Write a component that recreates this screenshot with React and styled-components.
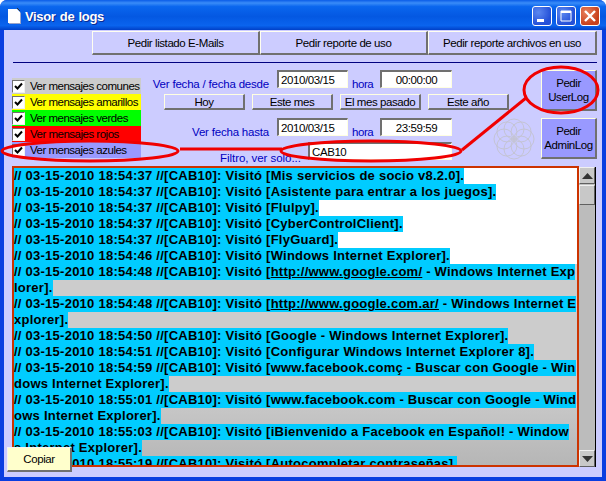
import styled, { createGlobalStyle } from 'styled-components'

const GlobalStyle = createGlobalStyle`
  html, body {
    margin: 0;
    padding: 0;
    background: #fff;
  }
  * {
    box-sizing: border-box;
  }
`

const stamp = (time) => `// 03-15-2010 ${time} //[CAB10]: Visitó [`

const whiteEntries = [
  { lines: [stamp('18:54:37') + 'Mis servicios de socio v8.2.0].'] },
  { lines: [stamp('18:54:37') + 'Asistente para entrar a los juegos].'] },
  { lines: [stamp('18:54:37') + 'Flulpy].'] },
  { lines: [stamp('18:54:37') + 'CyberControlClient].'] },
  { lines: [stamp('18:54:37') + 'FlyGuard].'] },
  { lines: [stamp('18:54:46') + 'Windows Internet Explorer].'] },
]

const grayEntries = [
  { link: 'http://www.google.com/', lines: [stamp('18:54:48') + 'http://www.google.com/ - Windows Internet Exp', 'lorer].'] },
  { link: 'http://www.google.com.ar/', lines: [stamp('18:54:48') + 'http://www.google.com.ar/ - Windows Internet E', 'xplorer].'] },
  { lines: [stamp('18:54:50') + 'Google - Windows Internet Explorer].'] },
  { lines: [stamp('18:54:51') + 'Configurar Windows Internet Explorer 8].'] },
  { lines: [stamp('18:54:59') + 'www.facebook.comç - Buscar con Google - Win', 'dows Internet Explorer].'] },
  { lines: [stamp('18:55:01') + 'www.facebook.com - Buscar con Google - Wind', 'ows Internet Explorer].'] },
  { lines: [stamp('18:55:03') + 'iBienvenido a Facebook en Español! - Window', 's Internet Explorer].'] },
  { lines: [stamp('18:55:19') + 'Autocompletar contraseñas].'] },
]

const filters = [
  { label: 'Ver mensajes comunes', color: '#cccccc' },
  { label: 'Ver mensajes amarillos', color: '#ffff00' },
  { label: 'Ver mensajes verdes', color: '#00ff00' },
  { label: 'Ver mensajes rojos', color: '#ff0000' },
  { label: 'Ver mensajes azules', color: '#9999ff' },
]

const LogText = ({ text, link }) => {
  if (!link || !text.includes(link)) return <Mark>{text}</Mark>
  const [before, after] = text.split(link)
  return <Mark>{before}<u>{link}</u>{after}</Mark>
}

const LogEntries = ({ items }) => items.map((entry, i) => (
  <div key={i}>
    {entry.lines.map((line, j) => (
      <LogLine key={j}><LogText text={line} link={entry.link} /></LogLine>
    ))}
  </div>
))

const App = () => {
  return (
    <Window>
      <GlobalStyle />
      <TitleBar>
        <DocIcon width="16" height="18" viewBox="0 0 16 18">
          <path d="M2 2h9l3 3v11H2z" fill="#fff" />
          <path d="M14 5v11H3v1h12V6z" fill="#9aa4c8" />
          <path d="M11 1h1v1h1v1h1v1h-1V3h-1V2h-1z" fill="#333" />
        </DocIcon>
        <Title>Visor de logs</Title>
        <CaptionButtons>
          <CaptionButton>
            <svg width="18" height="18" viewBox="0 0 18 18"><rect x="4" y="12" width="7" height="3" fill="#fff" /></svg>
          </CaptionButton>
          <CaptionButton>
            <svg width="18" height="18" viewBox="0 0 18 18"><path d="M4 4h10v10H4z" fill="none" stroke="#fff" /><rect x="4" y="4" width="10" height="2" fill="#fff" /></svg>
          </CaptionButton>
          <CaptionButton $close>
            <svg width="18" height="18" viewBox="0 0 18 18"><path d="M4 4l10 10M14 4L4 14" stroke="#fff" strokeWidth="2.4" /></svg>
          </CaptionButton>
        </CaptionButtons>
      </TitleBar>

      <Client>
        <TopBar>
          <TopButton $width={168}>Pedir listado E-Mails</TopButton>
          <TopButton $width={168}>Pedir reporte de uso</TopButton>
          <TopButton $width={169}>Pedir reporte archivos en uso</TopButton>
        </TopBar>
        <Divider />

        <Options>
          <CheckColumn>
            {filters.map(f => (
              <CheckRow key={f.label} $color={f.color}>
                <CheckBox>
                  <svg width="9" height="9" viewBox="0 0 9 9">
                    <path d="M1 4l2.5 2.5L8 1.5" fill="none" stroke="#000" strokeWidth="2" />
                  </svg>
                </CheckBox>
                {f.label}
              </CheckRow>
            ))}
          </CheckColumn>

          <DateColumn>
            <DateRow>
              <DateLabel>Ver fecha / fecha desde</DateLabel>
              <DateInput>2010/03/15</DateInput>
              <Hora>hora</Hora>
              <TimeInput>00:00:00</TimeInput>
            </DateRow>
            <QuickRow>
              <QuickButton>Hoy</QuickButton>
              <QuickButton>Este mes</QuickButton>
              <QuickButton>El mes pasado</QuickButton>
              <QuickButton>Este año</QuickButton>
            </QuickRow>
            <LowerBlock>
              <LowerRows>
                <DateRow>
                  <DateLabel>Ver fecha hasta</DateLabel>
                  <DateInput>2010/03/15</DateInput>
                  <Hora>hora</Hora>
                  <TimeInput>23:59:59</TimeInput>
                </DateRow>
                <FilterRow>
                  <FilterLabel>Filtro, ver solo...</FilterLabel>
                  <FilterInput>CAB10</FilterInput>
                </FilterRow>
              </LowerRows>
              <Ornament width="42" height="42" viewBox="0 0 42 42">
                {[0, 45, 90, 135, 180, 225, 270, 315].map(a => (
                  <circle
                    key={a}
                    cx={21 + 10 * Math.cos(a * Math.PI / 180)}
                    cy={21 + 10 * Math.sin(a * Math.PI / 180)}
                    r="10"
                    fill="none"
                    stroke="#c4c4d4"
                  />
                ))}
              </Ornament>
            </LowerBlock>
          </DateColumn>

          <RequestColumn>
            <RequestButton>Pedir<br />UserLog</RequestButton>
            <RequestButton>Pedir<br />AdminLog</RequestButton>
          </RequestColumn>
        </Options>

        <LogRow>
          <LogBox>
            <WhiteEntries><LogEntries items={whiteEntries} /></WhiteEntries>
            <GrayEntries><LogEntries items={grayEntries} /></GrayEntries>
          </LogBox>
          <ScrollBar>
            <ScrollButton>
              <svg width="11" height="6" viewBox="0 0 11 6"><path d="M5.5 0L11 6H0z" fill="#333" /></svg>
            </ScrollButton>
            <ScrollThumb />
            <ScrollTrack />
            <ScrollButton>
              <svg width="11" height="6" viewBox="0 0 11 6"><path d="M0 0h11L5.5 6z" fill="#333" /></svg>
            </ScrollButton>
          </ScrollBar>
        </LogRow>
      </Client>

      <CopyButton>Copiar</CopyButton>

      <Annotations width="606" height="481" viewBox="0 0 606 481">
        <g fill="none" stroke="#f00000" strokeWidth="3">
          <ellipse cx="90" cy="151" rx="88" ry="10" />
          <path d="M180 149H282" />
          <ellipse cx="371" cy="151" rx="90" ry="10" />
          <path d="M462 150L526 98" />
          <ellipse cx="561" cy="90" rx="37" ry="23" />
        </g>
      </Annotations>
    </Window>
  )
}

const Window = styled.div`
  position: relative;
  width: 606px;
  height: 481px;
  overflow: hidden;
  display: flex;
  flex-direction: column;
  padding: 0 3px 3px 3px;
  background: #0a3ee0;
  border-radius: 7px 7px 0 0;
  font-family: "Liberation Sans", Arial, sans-serif;
  font-size: 11.5px;
  letter-spacing: -0.42px;
  color: #000;
`

const TitleBar = styled.div`
  flex: none;
  height: 30px;
  margin: 0 -3px;
  padding: 2px 6px 0 6px;
  display: flex;
  align-items: center;
  background: linear-gradient(180deg, #0a5ce8 0%, #3a8cf8 10%, #0a66ee 22%, #0458e2 55%, #0a64ee 85%, #0040c8 100%);
`

const DocIcon = styled.svg`
  flex: none;
  margin-right: 3px;
`

const Title = styled.span`
  font-size: 13px;
  font-weight: bold;
  letter-spacing: -0.35px;
  word-spacing: 1px;
  color: #fff;
  text-shadow: 1px 1px 0 #0a2a90;
`

const CaptionButtons = styled.div`
  margin-left: auto;
  display: flex;
  gap: 4px;
`

const CaptionButton = styled.div`
  width: 20px;
  height: 20px;
  display: flex;
  align-items: center;
  justify-content: center;
  border: 1px solid #fff;
  border-radius: 3px;
  background: ${p => p.$close
    ? 'radial-gradient(circle at 30% 30%, #e8805c, #c8401c 70%)'
    : 'radial-gradient(circle at 30% 30%, #5c88f0, #2450d8 70%)'};
`

const Client = styled.div`
  flex: 1;
  min-height: 0;
  margin: 0 1px 1px;
  background: #ccccff;
  display: flex;
  flex-direction: column;
`

const TopBar = styled.div`
  flex: none;
  display: flex;
  justify-content: flex-end;
  padding: 1px 5px 0 0;
`

const TopButton = styled.div`
  width: ${p => p.$width}px;
  height: 24px;
  display: flex;
  align-items: center;
  justify-content: center;
  white-space: nowrap;
  background: #ccccff;
  border: 1px solid;
  border-color: #fffff0 #707070 #707070 #fffff0;
  border-width: 1px 2px 2px 1px;
`

const Divider = styled.div`
  flex: none;
  height: 1px;
  margin: 7px 5px 0 9px;
  background: #000080;
`

const Options = styled.div`
  flex: none;
  height: 103px;
  padding: 7px 5px 0 8px;
  display: flex;
`

const CheckColumn = styled.div`
  flex: none;
  width: 129px;
  margin-top: 8px;
  display: flex;
  flex-direction: column;
  letter-spacing: -0.5px;
`

const CheckRow = styled.div`
  height: 16px;
  display: flex;
  align-items: center;
  gap: 5px;
  white-space: nowrap;
  background: ${p => p.$color};
`

const CheckBox = styled.span`
  flex: none;
  width: 13px;
  height: 13px;
  display: flex;
  align-items: center;
  justify-content: center;
  background: #fff;
  border: 1px solid;
  border-color: #707070 #f0f0f0 #f0f0f0 #707070;
`

const DateColumn = styled.div`
  flex: none;
  width: 368px;
  margin-left: 3px;
  display: flex;
  flex-direction: column;
`

const DateRow = styled.div`
  height: 18px;
  display: flex;
  align-items: center;
`

const DateLabel = styled.span`
  width: 125px;
  margin-right: 8px;
  text-align: right;
  white-space: nowrap;
  letter-spacing: -0.2px;
  color: #0000c0;
  padding-top: 10px;
`

const Field = styled.div`
  height: 18px;
  display: flex;
  align-items: center;
  background: #fff;
  border: 1px solid;
  border-width: 2px 1px 1px 2px;
  border-color: #707070 #ffffe0 #ffffe0 #707070;
`

const DateInput = styled(Field)`
  width: 71px;
  padding-left: 2px;
`

const TimeInput = styled(Field)`
  width: 72px;
  justify-content: center;
`

const Hora = styled.span`
  width: 32px;
  padding: 10px 0 0 4px;
  color: #0000c0;
`

const QuickRow = styled.div`
  margin-top: 6px;
  padding-left: 20px;
  display: flex;
  gap: 7px;
`

const QuickButton = styled.div`
  width: 81px;
  height: 16px;
  display: flex;
  align-items: center;
  justify-content: center;
  white-space: nowrap;
  background: #ccccff;
  border: 1px solid;
  border-width: 1px 2px 2px 1px;
  border-color: #ffffe0 #707070 #707070 #ffffe0;
`

const LowerBlock = styled.div`
  margin-top: 8px;
  display: flex;
  align-items: flex-start;
`

const LowerRows = styled.div`
  width: 308px;
  display: flex;
  flex-direction: column;
  gap: 6px;
`

const FilterRow = styled.div`
  height: 18px;
  display: flex;
  align-items: center;
`

const FilterLabel = styled.span`
  width: 164px;
  padding: 14px 0 0 76px;
  white-space: nowrap;
  letter-spacing: -0.05px;
  color: #0000c0;
`

const FilterInput = styled(Field)`
  width: 144px;
  padding-left: 2px;
`

const Ornament = styled.svg`
  flex: none;
  margin: 0 0 0 41px;
`

const RequestColumn = styled.div`
  flex: none;
  margin-left: 29px;
  display: flex;
  flex-direction: column;
  gap: 7px;
`

const RequestButton = styled.div`
  width: 56px;
  height: 41px;
  display: flex;
  align-items: center;
  justify-content: center;
  text-align: center;
  line-height: 14px;
  background: #9999ff;
  border: 1px solid;
  border-width: 1px 2px 2px 1px;
  border-color: #ffffe0 #707070 #707070 #ffffe0;
`

const LogRow = styled.div`
  flex: none;
  padding-left: 8px;
  display: flex;
`

const LogBox = styled.div`
  width: 567px;
  height: 301px;
  border: 2px solid #cc3300;
  overflow: hidden;
  display: flex;
  flex-direction: column;
`

const WhiteEntries = styled.div`
  flex: none;
  background: #fff;
`

const GrayEntries = styled.div`
  flex: 1;
  background: linear-gradient(180deg, #cccccc 0%, #cccccc 60%, #b4b4b4 100%);
`

const LogLine = styled.div`
  height: 16px;
  line-height: 16px;
  white-space: nowrap;
  overflow: hidden;
  font-size: 13px;
  font-weight: bold;
  letter-spacing: 0.25px;
`

const Mark = styled.span`
  display: inline-block;
  height: 16px;
  background: #00ccff;
`

const ScrollBar = styled.div`
  width: 17px;
  height: 300px;
  margin-top: 1px;
  background: #c0c0c0;
  border-right: 1px solid #000;
  display: flex;
  flex-direction: column;
`

const ScrollButton = styled.div`
  flex: none;
  height: 17px;
  display: flex;
  align-items: center;
  justify-content: center;
  background: #c8c8c8;
  border: 1px solid;
  border-color: #f0f0f0 #606060 #606060 #f0f0f0;
`

const ScrollThumb = styled.div`
  flex: none;
  height: 20px;
  margin-top: 1px;
  background: #c8c8c8;
  border: 1px solid;
  border-color: #f0f0f0 #606060 #606060 #f0f0f0;
`

const ScrollTrack = styled.div`
  flex: 1;
  background: #bcbcbc;
`

const CopyButton = styled.div`
  position: absolute;
  left: 7px;
  top: 447px;
  width: 65px;
  height: 25px;
  display: flex;
  align-items: center;
  justify-content: center;
  background: #ffffcc;
  border: 1px solid;
  border-width: 1px 2px 2px 1px;
  border-color: #f4f4f4 #707070 #707070 #f4f4f4;
`

const Annotations = styled.svg`
  position: absolute;
  left: 0;
  top: 0;
  pointer-events: none;
`

export default App
